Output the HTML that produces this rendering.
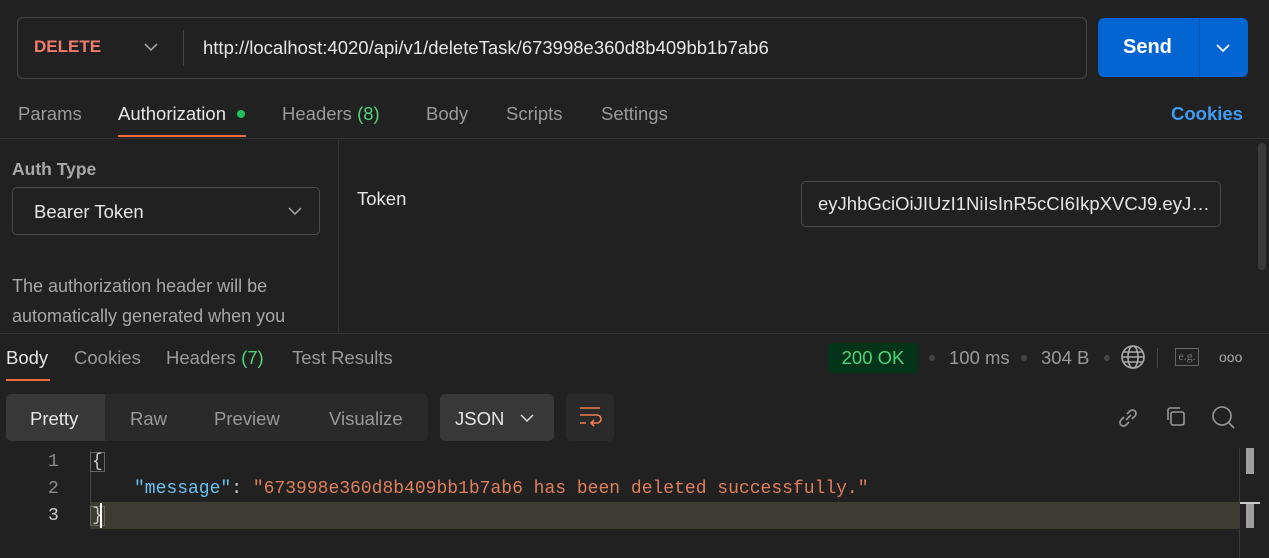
<!DOCTYPE html>
<html><head><style>
*{box-sizing:border-box;margin:0;padding:0}
body{width:1269px;height:558px;background:#212121;font-family:"Liberation Sans",sans-serif;color:#ababab;position:relative;overflow:hidden;font-size:18.5px}
.a{position:absolute;white-space:nowrap}
.mono{font-family:"Liberation Mono",monospace;font-size:18px}
</style></head><body>
<div class="a" style="left:17px;top:17px;width:1070px;height:62px;border:1px solid #444;border-radius:6px"></div>
<div class="a" style="left:34px;top:37px;color:#f07c6c;font-size:17px;font-weight:bold">DELETE</div>
<svg class="a" style="left:144px;top:42px" width="14" height="10"><path d="M1 2l6 6 6-6" stroke="#aaa" fill="none" stroke-width="1.5"/></svg>
<div class="a" style="left:183px;top:30px;width:1px;height:36px;background:#444"></div>
<div class="a" style="left:203px;top:37px;color:#e6e6e6">http://localhost:4020/api/v1/deleteTask/673998e360d8b409bb1b7ab6</div>
<div class="a" style="left:1098px;top:18px;width:150px;height:59px;background:#0265d2;border-radius:6px"></div>
<div class="a" style="left:1199px;top:18px;width:1px;height:59px;background:#0152ad"></div>
<div class="a" style="left:1123px;top:36px;color:#fff;font-weight:bold;font-size:20px">Send</div>
<svg class="a" style="left:1216px;top:43px" width="14" height="10"><path d="M1 2l6 6 6-6" stroke="#fff" fill="none" stroke-width="1.8"/></svg>

<div class="a" style="left:18px;top:103px;color:#9a9a9a">Params</div>
<div class="a" style="left:118px;top:103px;color:#e6e6e6">Authorization</div>
<div class="a" style="left:237px;top:110px;width:8px;height:8px;border-radius:50%;background:#1ec25c"></div>
<div class="a" style="left:118px;top:135px;width:128px;height:2px;background:#f26b3a"></div>
<div class="a" style="left:282px;top:103px;color:#9a9a9a">Headers <span style="color:#4fd37a">(8)</span></div>
<div class="a" style="left:426px;top:103px;color:#9a9a9a">Body</div>
<div class="a" style="left:506px;top:103px;color:#9a9a9a">Scripts</div>
<div class="a" style="left:601px;top:103px;color:#9a9a9a">Settings</div>
<div class="a" style="left:1171px;top:103px;color:#3f9cf5;font-weight:bold">Cookies</div>
<div class="a" style="left:0;top:138px;width:1269px;height:1px;background:#333"></div>
<div class="a" style="left:338px;top:139px;width:1px;height:194px;background:#333"></div>

<div class="a" style="left:12px;top:159px;color:#a8a8a8;font-weight:bold;font-size:17.5px">Auth Type</div>
<div class="a" style="left:12px;top:187px;width:308px;height:48px;border:1px solid #4a4a4a;border-radius:5px"></div>
<div class="a" style="left:34px;top:201px;color:#e6e6e6">Bearer Token</div>
<svg class="a" style="left:288px;top:206px" width="14" height="10"><path d="M1 2l6 6 6-6" stroke="#aaa" fill="none" stroke-width="1.5"/></svg>
<div class="a" style="left:12px;top:276px;color:#a8a8a8;font-size:18px">The authorization header will be</div>
<div class="a" style="left:12px;top:306px;color:#a8a8a8;font-size:18px">automatically generated when you</div>
<div class="a" style="left:357px;top:188px;color:#e6e6e6">Token</div>
<div class="a" style="left:801px;top:181px;width:420px;height:46px;border:1px solid #4a4a4a;border-radius:5px"></div>
<div class="a" style="left:818px;top:193px;color:#e6e6e6;width:392px;overflow:hidden">eyJhbGciOiJIUzI1NiIsInR5cCI6IkpXVCJ9.eyJ…</div>
<div class="a" style="left:1258px;top:143px;width:8px;height:127px;background:#3a3a3a;border-radius:4px"></div>
<div class="a" style="left:0;top:333px;width:1269px;height:1px;background:#333"></div>

<div class="a" style="left:6px;top:347px;color:#e6e6e6">Body</div>
<div class="a" style="left:6px;top:379px;width:44px;height:2px;background:#f26b3a"></div>
<div class="a" style="left:74px;top:347px;color:#9a9a9a">Cookies</div>
<div class="a" style="left:166px;top:347px;color:#9a9a9a">Headers <span style="color:#4fd37a">(7)</span></div>
<div class="a" style="left:292px;top:347px;color:#9a9a9a">Test Results</div>
<div class="a" style="left:828px;top:343px;width:90px;height:30px;background:#033419;border-radius:4px;color:#4fd37a;text-align:center;line-height:30px">200 OK</div>
<div class="a" style="left:929px;top:355px;width:6px;height:6px;border-radius:50%;background:#444"></div>
<div class="a" style="left:949px;top:347px;color:#9a9a9a">100 ms</div>
<div class="a" style="left:1021px;top:355px;width:6px;height:6px;border-radius:50%;background:#444"></div>
<div class="a" style="left:1041px;top:347px;color:#9a9a9a">304 B</div>
<div class="a" style="left:1104px;top:355px;width:6px;height:6px;border-radius:50%;background:#444"></div>
<svg class="a" style="left:1120px;top:344px" width="26" height="26" fill="none" stroke="#aaa" stroke-width="1.6"><circle cx="13" cy="13" r="11"/><ellipse cx="13" cy="13" rx="5" ry="11"/><path d="M2 13h22M4 8h18M4 18h18"/></svg>
<div class="a" style="left:1157px;top:348px;width:1px;height:20px;background:#444"></div>
<div class="a" style="left:1175px;top:348px;width:24px;height:18px;border:1px solid #666;font-size:12px;color:#777;font-family:'Liberation Serif',serif;text-align:center;line-height:15px">e.g.</div>
<div class="a" style="left:1219px;top:349px;color:#aaa;font-size:14px;letter-spacing:0px">ooo</div>

<div class="a" style="left:6px;top:394px;width:422px;height:47px;background:#2a2a2a;border-radius:5px"></div>
<div class="a" style="left:6px;top:394px;width:99px;height:47px;background:#383838;border-radius:5px 0 0 5px"></div>
<div class="a" style="left:30px;top:408px;color:#e6e6e6">Pretty</div>
<div class="a" style="left:130px;top:408px;color:#9a9a9a">Raw</div>
<div class="a" style="left:214px;top:408px;color:#9a9a9a">Preview</div>
<div class="a" style="left:329px;top:408px;color:#9a9a9a">Visualize</div>
<div class="a" style="left:440px;top:394px;width:114px;height:47px;background:#383838;border-radius:5px"></div>
<div class="a" style="left:455px;top:408px;color:#e6e6e6">JSON</div>
<svg class="a" style="left:520px;top:413px" width="14" height="10"><path d="M1 2l6 6 6-6" stroke="#ddd" fill="none" stroke-width="1.5"/></svg>
<div class="a" style="left:566px;top:394px;width:48px;height:47px;background:#2a2a2a;border-radius:5px"></div>
<svg class="a" style="left:577px;top:405px" width="26" height="24" fill="none" stroke="#f07c4c" stroke-width="1.6"><path d="M3 3h20M3 10h17a4 4 0 0 1 0 8h-6M17 15l-3 3 3 3M3 18h6"/></svg>
<svg class="a" style="left:1115px;top:405px" width="26" height="26" fill="none" stroke="#999" stroke-width="1.6"><path d="M11 15l5-5M9 12l-3 3a3.5 3.5 0 0 0 5 5l3-3M17 14l3-3a3.5 3.5 0 0 0-5-5l-3 3"/></svg>
<svg class="a" style="left:1163px;top:404px" width="26" height="26" fill="none" stroke="#999" stroke-width="1.6"><rect x="8" y="8" width="13" height="13" rx="2"/><path d="M5 16V6a2 2 0 0 1 2-2h10"/></svg>
<svg class="a" style="left:1210px;top:404px" width="28" height="28" fill="none" stroke="#999" stroke-width="1.6"><circle cx="12" cy="12" r="9"/><path d="M19 19l5 5"/></svg>

<div class="a" style="left:90px;top:502px;width:1150px;height:27px;background:#3d3c30"></div>
<div class="a" style="left:90px;top:449px;width:1px;height:55px;background:#444"></div>
<div class="a mono" style="left:48px;top:452px;color:#8a8a8a">1</div>
<div class="a mono" style="left:48px;top:479px;color:#8a8a8a">2</div>
<div class="a mono" style="left:48px;top:506px;color:#cfcfcf">3</div>
<div class="a mono" style="left:90px;top:452px;color:#ccc;border:1px solid #666;line-height:18px;padding:0 1px">{</div>
<div class="a mono" style="left:134px;top:479px;color:#ccc"><span style="color:#6cc1f0">"message"</span>: <span style="color:#e07f5b">"673998e360d8b409bb1b7ab6 has been deleted successfully."</span></div>
<div class="a mono" style="left:90px;top:506px;color:#ccc;border:1px solid #666;line-height:18px;padding:0 1px">}</div>
<div class="a" style="left:100px;top:503px;width:2px;height:25px;background:#fff"></div>
<div class="a" style="left:1239px;top:448px;width:1px;height:110px;background:#3a3a3a"></div>
<div class="a" style="left:1246px;top:448px;width:8px;height:26px;background:#9e9e9e"></div>
<div class="a" style="left:1240px;top:502px;width:20px;height:2px;background:#ccc"></div>
<div class="a" style="left:1246px;top:504px;width:8px;height:24px;background:#9e9e9e"></div>
</body></html>
